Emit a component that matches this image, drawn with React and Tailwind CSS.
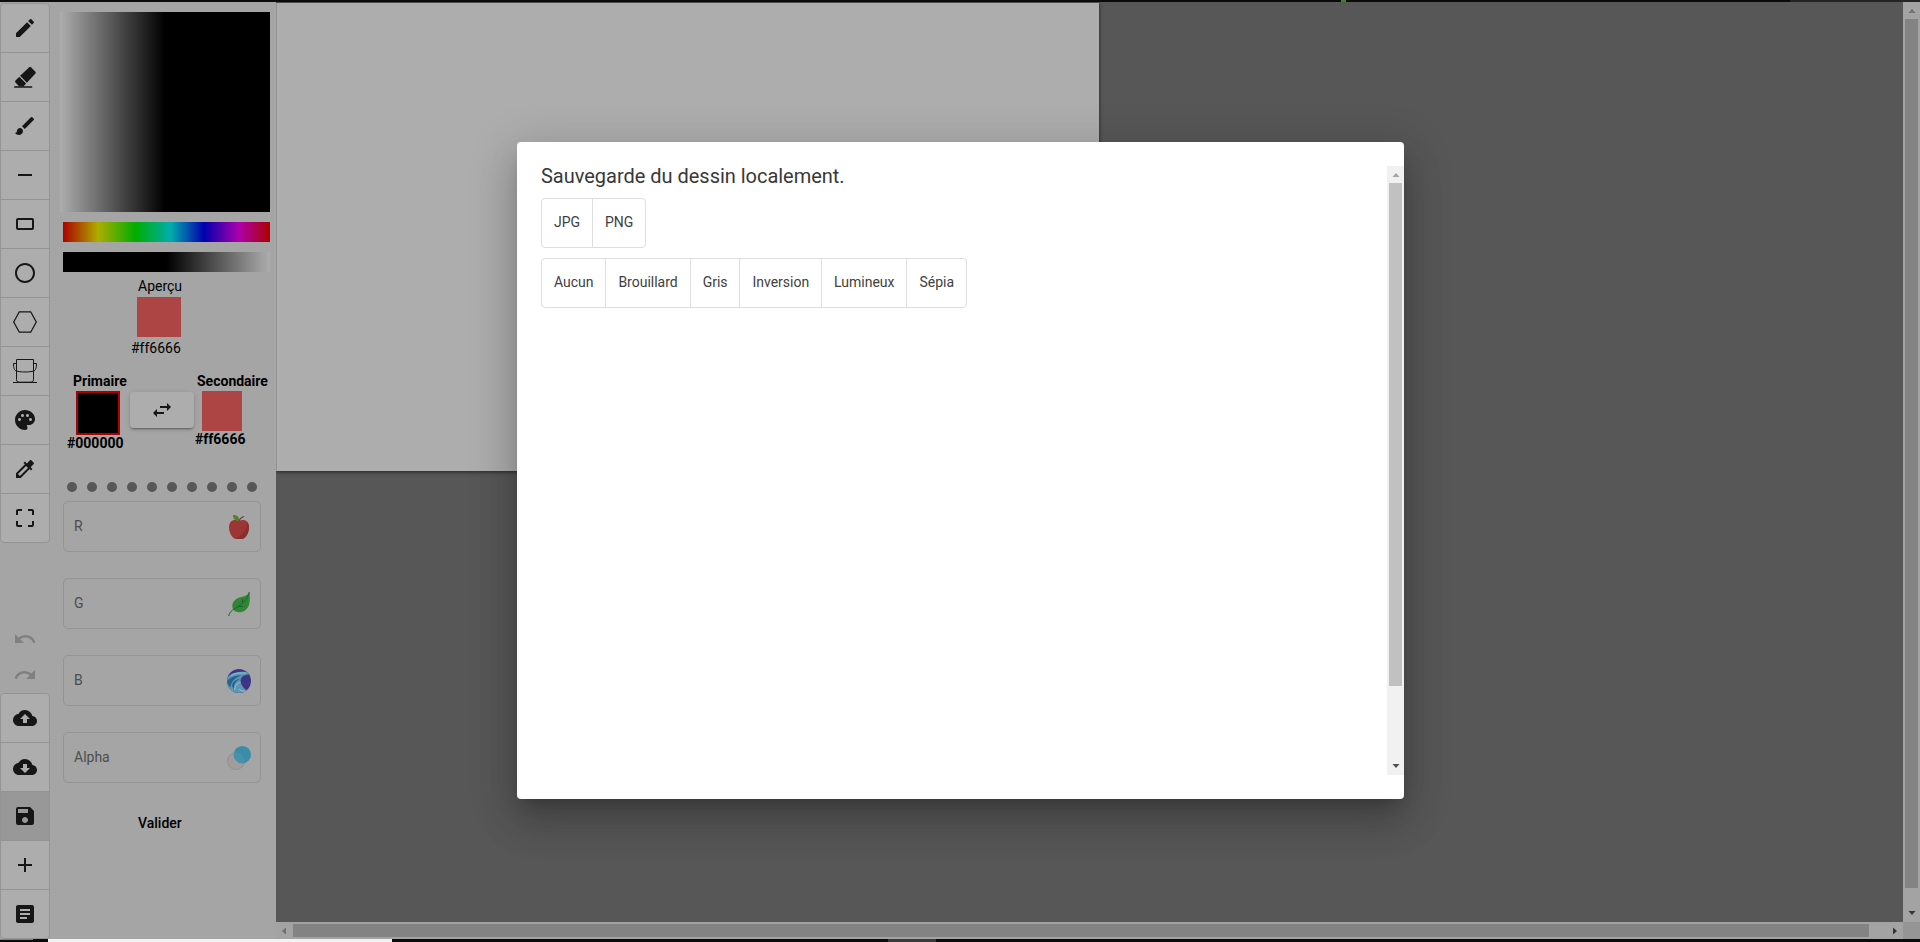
import React from "react";
import {
  MdEdit, MdBrush, MdRemove, MdPanoramaFishEye, MdPalette, MdColorize, MdCropFree,
  MdUndo, MdRedo, MdCloudUpload, MdCloudDownload, MdSave, MdAdd, MdArticle,
} from "react-icons/md";

const Eraser = () => (
  <svg width="24" height="24" viewBox="0 0 24 24" fill="currentColor">
    <path d="M16.300 2.200q.8-.7 1.600 0l4.500 4.500q.8.800 0 1.700l-8.500 9.300-6.800-6.900z" />
    <path d="M6.300 11.700l6.800 6.900-2.600 2.900H6.200l-3.700-3.900c-.6-.7-.6-1.300 0-2z" />
    <path d="M1.200 21h18v1.900h-18z" opacity=".75" />
  </svg>
);
const Rectangle = () => (
  <svg width="24" height="24" viewBox="0 0 24 24" fill="none" stroke="currentColor" strokeWidth="2">
    <rect x="4" y="7" width="16" height="10" rx="1" />
  </svg>
);
const Hexagon = () => (
  <svg width="24" height="24" viewBox="0 0 24 24" fill="none" stroke="currentColor" strokeWidth="1.3">
    <path d="M6.300 1.800h11.400L23.300 12l-5.600 10.200H6.300L.7 12z" />
  </svg>
);
const Bucket = () => (
  <svg width="24" height="24" viewBox="0 0 24 24" fill="none" stroke="currentColor" strokeWidth="1">
    <path d="M3.500 .5h17v20.200q0 2.500-2.500 2.500H6q-2.500 0-2.500-2.500zM3.500 12c3 1.300 14 1.300 17 0M3.500 4.500H.5c0 4 .7 7 3 7.500M20.500 4.500h3c0 4-.7 7-3 7.500M0 23.500h24" />
  </svg>
);

const drawingTools = [
  MdEdit, Eraser, MdBrush, MdRemove, Rectangle, MdPanoramaFishEye, Hexagon, Bucket, MdPalette, MdColorize, MdCropFree,
];
const fileTools = [MdCloudUpload, MdCloudDownload, MdSave, MdAdd, MdArticle];

function ToolGroup({ tools, active }) {
  return (
    <div className="flex w-[50px] flex-col divide-y divide-[#949494] overflow-hidden rounded border border-[#949494] bg-[#adadad] text-[#161616]">
      {tools.map((Icon, i) => (
        <button key={i} className={`flex w-full items-center justify-center ${i === tools.length - 1 ? "h-12" : "h-[49px]"} ${i === active ? "bg-[#989898]" : ""}`}>
          <Icon size={24} />
        </button>
      ))}
    </div>
  );
}

const Apple = () => (
  <svg width="24" height="24" viewBox="0 0 24 24">
    <path d="M12 6.300C8 3.500 2 5 2 12.500 2 18 5.500 24 9.500 24q2.500-.6 5 0c4 0 7.500-6 7.500-11.500C22 5 16 3.500 12 6.300z" fill="#9d3534" />
    <path d="M20 7c.5 7-4 13-11.500 16.800l6 .2C18.500 24 22 18 22 12.500 22 10 21.300 8 20 7z" fill="#892d2d" />
    <path d="M12 6.500c.5-2.500 2-4.200 5.200-5" stroke="#5b4638" strokeWidth="1.200" fill="none" />
    <path d="M12 6C7.500 6 6 3.500 6 0c4 0 6.500 1.500 6 6z" fill="#587f2f" />
  </svg>
);
const Leaf = () => (
  <svg width="24" height="24" viewBox="0 0 24 24">
    <path d="M22.300 0c-1.800 5-7.500 4-12.300 6.500C4 10 4.300 16.500 8 19.300c5 2.700 12 0 14-6.300 1.300-4 .9-9 .3-13z" fill="#328633" />
    <path d="M22.300 0C20.500 7 16 12 8 16.500 4 19 2.500 20.500 1.700 24M15.500 10.500V6.800M11.500 14.500l4.500.2" stroke="#19633a" strokeWidth="1" fill="none" />
  </svg>
);
const Wave = () => (
  <svg width="24" height="24" viewBox="0 0 24 24">
    <circle cx="12" cy="12" r="12" fill="#3c3486" />
    <path d="M.6 8.500C3 4.500 9 2 20.500 2.800L22 5.500C19 6 17 6 15 8c-3 3.500-1 9 4.500 13.300C17.500 23 15 24 12 24 5 24 0 18.500 0 12q0-2 .6-3.500z" fill="#5f94b2" />
    <path d="M0 12C3 8.500 8 6 14.500 6.500 9.500 8 4.500 11 3.200 18.500Q.3 15.500 0 12zM5 17c.5-4 3.500-6.500 8.500-7.200C9 11.500 6.500 15 7 21z" fill="#24638e" />
    <path d="M7.500 21c0-4 2-6.500 6-8M12 20c2 2 4 2.500 6 2M4 6.800c4-3 9-3.500 15-2.600" stroke="#83b8cd" strokeWidth="1.300" fill="none" />
  </svg>
);
const Opacity = () => (
  <svg width="24" height="24" viewBox="0 0 24 24">
    <circle cx="9" cy="15" r="8.500" fill="#a29d9d" stroke="#918c8c" strokeWidth=".8" />
    <circle cx="15.300" cy="8.700" r="8.700" fill="#3a8caa" />
    <path d="M7 6.700A8.500 8.500 0 0 1 17.300 17 8.700 8.700 0 0 1 7 6.700z" fill="#4891ab" />
  </svg>
);

const channels = [
  { label: "R", Icon: Apple },
  { label: "G", Icon: Leaf },
  { label: "B", Icon: Wave },
  { label: "Alpha", Icon: Opacity },
];

function ColorPanel() {
  return (
    <div className="flex w-[226px] shrink-0 flex-col pl-[10px] pt-[10px] text-[14px] text-black">
      <div className="h-[200px] w-[210px] bg-[linear-gradient(to_right,#adadad,#000_50%)]" />
      <div className="ml-[3px] mt-[10px] h-5 w-[207px] bg-[linear-gradient(to_right,#ad0000,#adad00_17%,#00ad00_35%,#00adad_52%,#0000ad_68%,#ad00ad_85%,#ad0000)]" />
      <div className="ml-[3px] mt-[10px] h-5 w-[207px] bg-[linear-gradient(to_right,#000_50%,#adadad)]" />
      <div className="ml-[78px] mt-[4px] h-[21px] leading-5">Aperçu</div>
      <div className="ml-[77px] h-10 w-11 bg-[#ad4545]" />
      <div className="ml-[71px] mt-[1px] h-5 leading-5">#ff6666</div>
      <div className="mt-[13px] flex h-[76px] font-bold">
        <div className="flex w-[70px] flex-col pl-[7px]">
          <span className="ml-[6px] h-[22px] leading-5">Primaire</span>
          <span className="ml-[9px] h-11 w-11 shrink-0 border-2 border-[#ad0000] bg-black" />
          <span className="h-4 leading-4">#000000</span>
        </div>
        <button className="mt-[21px] flex h-9 w-16 shrink-0 items-center justify-center rounded bg-[#adadad] text-[#161616] shadow-[0_3px_1px_-2px_rgba(0,0,0,.2),0_2px_2px_0_rgba(0,0,0,.14),0_1px_5px_0_rgba(0,0,0,.12)]">
          <svg width="24" height="24" viewBox="0 0 24 24" fill="currentColor"><path d="M6.990 11L3 15l3.990 4v-3H14v-2H6.990v-3zM21 9l-3.990-4v3H10v2h7.010v3L21 9z" /></svg>
        </button>
        <div className="flex flex-col">
          <span className="ml-[3px] h-[22px] leading-5">Secondaire</span>
          <span className="ml-2 h-10 w-10 shrink-0 bg-[#ad4545]" />
          <span className="ml-[1px] h-4 leading-4">#ff6666</span>
        </div>
      </div>
      <div className="ml-[7px] mt-[35px] flex gap-[10px]">
        {Array.from({ length: 10 }, (_, i) => <span key={i} className="h-[10px] w-[10px] rounded-full bg-[#575757]" />)}
      </div>
      <div className="ml-[3px] mt-[9px] flex flex-col gap-[26px]">
        {channels.map(({ label, Icon }) => (
          <div key={label} className="flex h-[51px] w-[198px] items-center justify-between rounded-[5px] border border-[#949494] pl-[10px] pr-[9px] text-[#4d4d4d]">
            <span>{label}</span>
            <Icon />
          </div>
        ))}
      </div>
      <div className="ml-[78px] mt-[30px] h-5 font-medium leading-5">Valider</div>
    </div>
  );
}

const Arrow = ({ d, className }) => (
  <svg width="8" height="8" viewBox="0 0 8 8" className={className} fill="currentColor"><path d={d} /></svg>
);
const UP = "M.5 6h7L4 2z";
const DOWN = "M.5 2h7L4 6z";
const LEFT = "M6 .5v7L2 4z";
const RIGHT = "M2 .5v7L6 4z";

function CanvasArea() {
  return (
    <div className="flex min-w-0 flex-1 flex-col">
      <div className="flex h-[920px]">
        <div className="flex-1 overflow-hidden bg-[#575757] pt-[1px]">
          <div className="h-[468px] w-[823px] border-l border-[#949494] bg-[#adadad] shadow-[0_1px_4px_rgba(0,0,0,.6)]" />
        </div>
        <div className="flex w-[17px] flex-col items-center justify-between bg-[#a3a3a3]">
          <Arrow d={UP} className="mt-[5px] text-[#707070]" />
          <div className="mb-auto mt-[4px] h-[869px] w-[13px] bg-[#838383]" />
          <Arrow d={DOWN} className="mb-[5px] text-[#353535]" />
        </div>
      </div>
      <div className="flex h-[17px] items-center bg-[#a3a3a3]">
        <Arrow d={LEFT} className="ml-1 text-[#707070]" />
        <div className="ml-[5px] h-[13px] w-[1576px] bg-[#838383]" />
        <Arrow d={RIGHT} className="ml-[22px] text-[#353535]" />
        <div className="ml-auto h-[17px] w-[17px] bg-[#959595]" />
      </div>
    </div>
  );
}

function ToggleRow({ items }) {
  return (
    <div className="flex h-[50px] w-fit divide-x divide-[#dedede] overflow-hidden rounded border border-[#dedede] text-[14px] text-[#404040]">
      {items.map((t) => <button key={t} className="px-[11.95px] pb-[2px]">{t}</button>)}
    </div>
  );
}

function SaveDialog() {
  return (
    <div className="absolute left-[517px] top-[142px] h-[657px] w-[887px] rounded bg-white py-6 pl-6 shadow-[0_11px_15px_-7px_rgba(0,0,0,.2),0_24px_38px_3px_rgba(0,0,0,.14),0_9px_46px_8px_rgba(0,0,0,.12)]">
      <div className="flex h-full justify-between">
        <div className="flex flex-col">
          <h2 className="mb-[10px] h-[22px] text-[20px] leading-[20px] tracking-[-0.02px] text-[#383838]">Sauvegarde du dessin localement.</h2>
          <ToggleRow items={["JPG", "PNG"]} />
          <div className="h-[10px]" />
          <ToggleRow items={["Aucun", "Brouillard", "Gris", "Inversion", "Lumineux", "Sépia"]} />
        </div>
        <div className="flex w-[17px] flex-col items-center bg-[#f1f1f1]">
          <Arrow d={UP} className="mt-[5px] text-[#a3a3a3]" />
          <div className="mt-[4px] h-[503px] w-[13px] bg-[#c1c1c1]" />
          <Arrow d={DOWN} className="mb-[5px] mt-auto text-[#505050]" />
        </div>
      </div>
    </div>
  );
}

export default function App() {
  return (
    <div className="relative flex h-[942px] w-[1920px] flex-col overflow-hidden bg-[#a5a5a5] font-['Roboto',sans-serif]">
      <div className="flex h-[2px] justify-between bg-[#0b0b0b]">
        <div className="ml-[1341px] w-[5px] bg-[#2f8a20]" />
        <div className="w-[130px] bg-[#242424]" />
      </div>
      <div className="flex h-[937px]">
        <div className="flex w-[50px] shrink-0 flex-col pt-[1px]">
          <ToolGroup tools={drawingTools} />
          <div className="mt-[84px] flex flex-col items-center gap-3 text-[#808080]">
            <MdUndo size={24} />
            <MdRedo size={24} />
          </div>
          <div className="mt-auto"><ToolGroup tools={fileTools} active={2} /></div>
        </div>
        <ColorPanel />
        <CanvasArea />
      </div>
      <div className="flex h-[3px] bg-[#0b0b0b]">
        <div className="h-[1px] w-[33px] bg-[#4f9a9a]" />
        <div className="ml-[15px] w-[344px] bg-[#f2f2f2]" />
        <div className="ml-[496px] w-[48px] bg-[#3a3a3a]" />
      </div>
      <SaveDialog />
    </div>
  );
}
